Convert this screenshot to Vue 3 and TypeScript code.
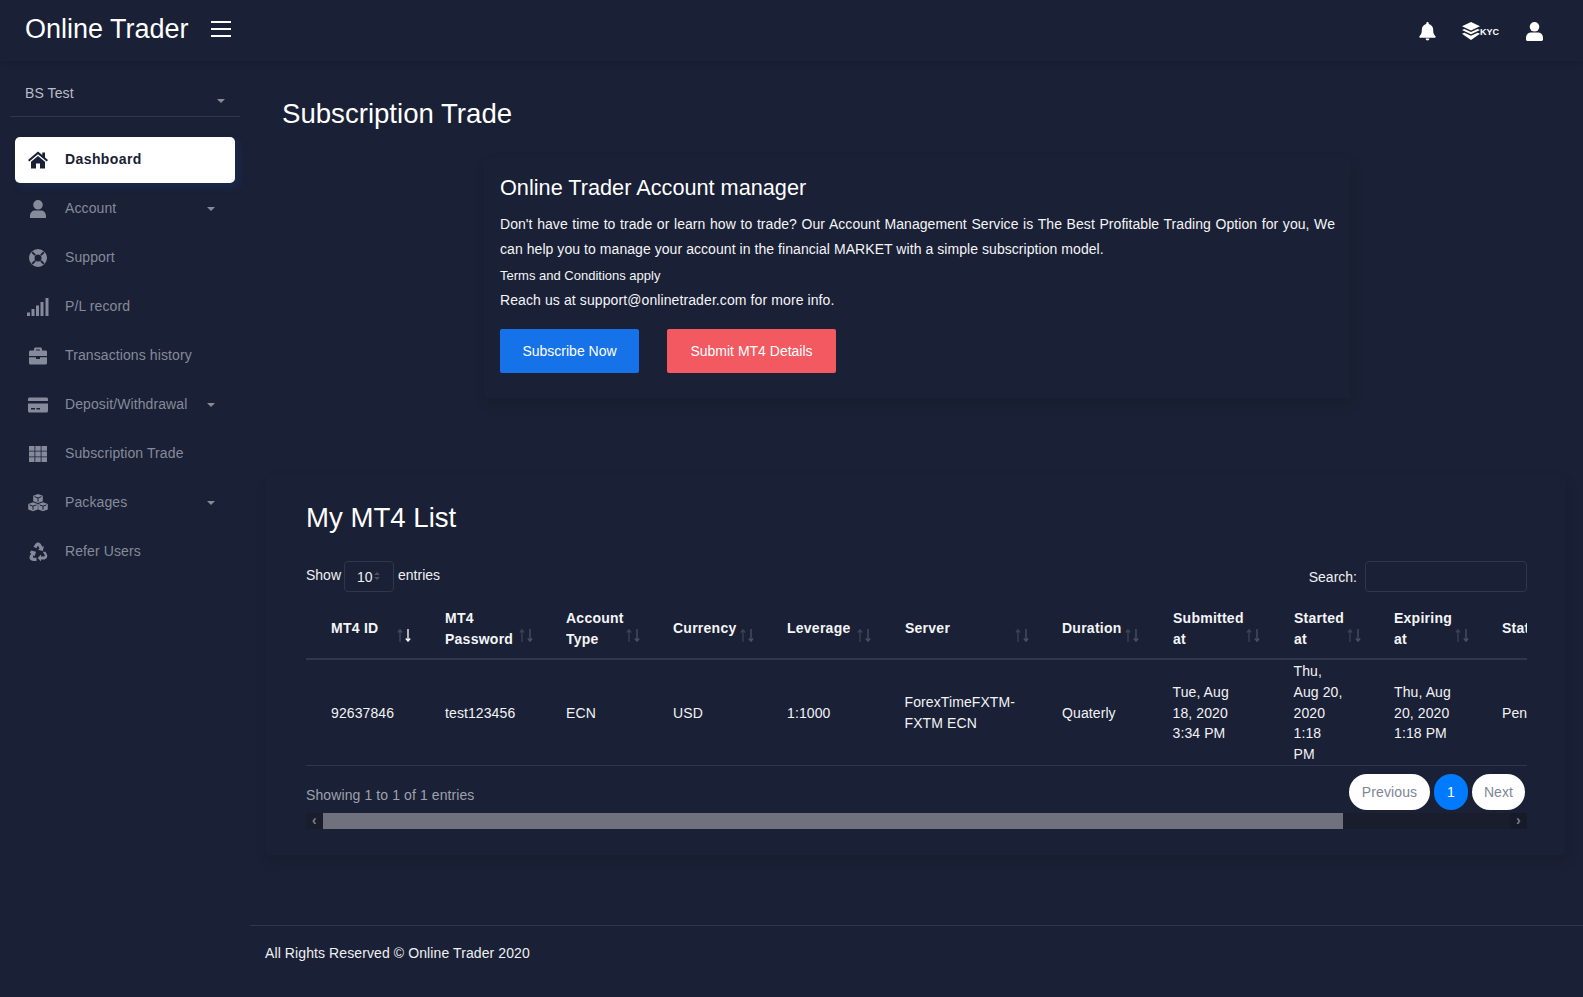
<script setup lang="ts">
interface NavItem { label: string; icon: string; caret?: boolean; active?: boolean }
const nav: NavItem[] = [
  { label: 'Dashboard', icon: 'home', active: true },
  { label: 'Account', icon: 'user', caret: true },
  { label: 'Support', icon: 'ring' },
  { label: 'P/L record', icon: 'signal' },
  { label: 'Transactions history', icon: 'case' },
  { label: 'Deposit/Withdrawal', icon: 'card', caret: true },
  { label: 'Subscription Trade', icon: 'grid' },
  { label: 'Packages', icon: 'cubes', caret: true },
  { label: 'Refer Users', icon: 'recycle' }
]
const cols = [
  { h: 'MT4 ID', w: 114, sort: 91, active: true },
  { h: 'MT4 Password', w: 121, sort: 99 },
  { h: 'Account Type', w: 107, sort: 85 },
  { h: 'Currency', w: 114, sort: 92 },
  { h: 'Leverage', w: 118, sort: 95 },
  { h: 'Server', w: 157, sort: 135 },
  { h: 'Duration', w: 111, sort: 88 },
  { h: 'Submitted at', w: 121, sort: 98 },
  { h: 'Started at', w: 100, sort: 78 },
  { h: 'Expiring at', w: 108, sort: 86 },
  { h: 'Status', w: 100, sort: 200 }
]
const row = ['92637846', 'test123456', 'ECN', 'USD', '1:1000', 'ForexTimeFXTM-FXTM ECN', 'Quaterly', 'Tue, Aug 18, 2020 3:34 PM', 'Thu, Aug 20, 2020 1:18 PM', 'Thu, Aug 20, 2020 1:18 PM', 'Pending']
</script>

<template>
  <div class="page">
    <header class="topbar">
      <div class="brand">
        <span class="logo">Online Trader</span>
        <svg class="burger" width="20" height="16" viewBox="0 0 20 16"><path d="M0 1h20M0 8h20M0 15h20" stroke="#fff" stroke-width="2" /></svg>
      </div>
      <div class="top-icons">
        <svg class="bell" width="17" height="19" viewBox="0 0 18 20"><path fill="#fff" d="M9 0a1.300 1.300 0 0 1 1.300 1.400v.7C13 2.700 15 5 15 8c0 4.500 1.200 5.700 2.500 7 .5.600.1 1.500-.7 1.500H1.200c-.8 0-1.200-.9-.7-1.500C1.800 13.700 3 12.500 3 8c0-3 2-5.300 4.700-5.900v-.7A1.300 1.300 0 0 1 9 0zM7 17.500h4a2 2 0 0 1-4 0z" /></svg>
        <span class="kyc">
          <svg width="18" height="18" viewBox="0 0 18 18"><path fill="#fff" d="M9 0 18 4.200 9 8.400 0 4.200zM2.400 6.900 9 10l6.600-3.100 2.400 1.100L9 12.200 0 8zM2.400 10.700 9 13.800l6.600-3.100 2.400 1.100L9 18 0 11.800z" /></svg>
          <b>KYC</b>
        </span>
        <svg width="17" height="19" viewBox="0 0 17 19"><circle cx="8.500" cy="4.800" r="4.800" fill="#fff" /><path fill="#fff" d="M0 16c0-3.300 2.200-5.500 5-5.500h7c2.800 0 5 2.200 5 5.500v1.200c0 1-.7 1.800-1.700 1.800H1.700C.7 19 0 18.200 0 17.200z" /></svg>
      </div>
    </header>

    <div class="body">
      <aside class="sidebar">
        <div class="profile">
          <span>BS Test</span>
          <i class="caret small"></i>
        </div>
        <nav class="nav">
          <a v-for="n in nav" :key="n.label" class="nav-item" :class="{ active: n.active }">
            <span class="nav-icon">
              <svg width="22" height="22" viewBox="0 0 22 22" fill="currentColor">
                <path v-if="n.icon === 'home'" d="M11 2.500 1 11l1.300 1.500L11 5.200l8.700 7.300L21 11l-3-2.600V3.500h-2.700v2.600zM11 7 4 12.800V19.500h5v-5h4v5h5v-6.700z" />
                <path v-else-if="n.icon === 'user'" d="M11 2a4.800 4.800 0 1 1 0 9.600A4.800 4.800 0 0 1 11 2zM3 18c0-3.500 2.500-5.500 5-5.500h6c2.500 0 5 2 5 5.500v2H3z" />
                <path v-else-if="n.icon === 'ring'" fill-rule="evenodd" d="M11 2a9 9 0 1 1 0 18 9 9 0 0 1 0-18zm0 5.500a3.500 3.500 0 1 0 0 7 3.500 3.500 0 0 0 0-7zM5.800 4.500 4.500 5.800l3 3 1.300-1.300zm10.400 0-3 3 1.300 1.300 3-3zM7.500 13.200l-3 3 1.300 1.300 3-3zm7 0-1.300 1.300 3 3 1.300-1.300z" />
                <path v-else-if="n.icon === 'signal'" d="M0 16.500h3v3.500H0zM4.500 13h3v7h-3zM9 9.500h3V20H9zM13.500 6h3v14h-3zM18.500 2H21.500v18h-3z" />
                <path v-else-if="n.icon === 'case'" d="M7 5.500V4c0-.8.7-1.500 1.500-1.500h5c.8 0 1.500.7 1.500 1.500v1.500h3.500c1 0 1.500.7 1.500 1.500v4H2V7c0-.8.5-1.500 1.500-1.500zM9 4.500v1h4v-1zM2 12.300h7v1.700h4v-1.700h7V18c0 .9-.6 1.500-1.500 1.500h-15C2.600 19.500 2 18.900 2 18z" />
                <path v-else-if="n.icon === 'card'" d="M1 5c0-.8.7-1.500 1.500-1.500h17c.8 0 1.500.7 1.500 1.500v2H1zM1 9.500h20V17c0 .8-.7 1.500-1.500 1.500h-17C1.700 18.500 1 17.800 1 17zm3 4.500v1.500h4V14zm5.500 0v1.500H13V14z" />
                <path v-else-if="n.icon === 'grid'" d="M2 3h5.500v4.800H2zM8.300 3h5.400v4.800H8.300zM14.500 3H20v4.800h-5.500zM2 8.600h5.500v4.800H2zM8.300 8.600h5.400v4.800H8.300zM14.500 8.600H20v4.800h-5.500zM2 14.200h5.500V19H2zM8.300 14.200h5.400V19H8.300zM14.500 14.200H20V19h-5.500z" />
                <g v-else-if="n.icon === 'cubes'">
                  <path d="M11 2l4.800 1.800v5.400L11 11 6.200 9.200V3.800zM6 10.300l4.800 1.800v5.400L6 19.300l-4.800-1.800v-5.400zM16 10.300l4.800 1.800v5.400L16 19.300l-4.800-1.800v-5.400z" />
                  <path d="M7.500 4.600 11 6l3.500-1.400M2.600 12.900 6 14.200l3.400-1.300M12.600 12.900 16 14.200l3.400-1.300M11 6v3.600M6 14.200v3.600M16 14.200v3.600" fill="none" stroke="#1a2035" stroke-width="1" />
                </g>
                <path v-else d="M8 3.500C9 2 10 1.500 11 1.500s2.200.5 3 2l1.500 2.500 1.500-.9-1.200 4.800-4.800-1.200 1.500-.9L11 4.500 9.300 7.300 6.500 5.800zM4.300 9.500l4.700 1.300-1.400 4.700-.8-1.500-.8 1.400c-.2.600.2 1.300 1 1.300H9.500v3.300H6.500c-3 0-5-2.700-3.500-5.400l1.200-2.100-1.400-.9zM18.500 10.800l1.300 2.400c1.400 2.700-.4 5.300-3.300 5.300H14v2l-3.300-3.500 3.300-3.500v2h2.800c.8 0 1.200-.8.900-1.400l-1.900-3.300z" />
              </svg>
            </span>
            <span class="nav-label">{{ n.label }}</span>
            <i v-if="n.caret" class="caret"></i>
          </a>
        </nav>
      </aside>

      <main class="main">
        <div class="content">
          <h2 class="page-title">Subscription Trade</h2>

          <section class="promo">
            <h4>Online Trader Account manager</h4>
            <p class="just">Don't have time to trade or learn how to trade? Our Account Management Service is The Best Profitable Trading Option for you, We can help you to manage your account in the financial MARKET with a simple subscription model.</p>
            <p class="terms">Terms and Conditions apply</p>
            <p>Reach us at support@onlinetrader.com for more info.</p>
            <div class="actions">
              <button class="btn blue">Subscribe Now</button>
              <button class="btn red">Submit MT4 Details</button>
            </div>
          </section>

          <section class="list-card">
            <h2 class="list-title">My MT4 List</h2>
            <div class="scroller">
              <div class="clip">
                <div class="controls">
                  <label class="len">Show <span class="select">10<i class="spin"></i></span> entries</label>
                  <label class="search"><span class="search-text">Search:</span> <span class="input"></span></label>
                </div>
                <table class="grid">
                  <colgroup>
                    <col v-for="c in cols" :key="c.h" :style="{ width: c.w + 'px' }" />
                  </colgroup>
                  <thead>
                    <tr>
                      <th v-for="c in cols" :key="c.h">
                        <span class="th-text">{{ c.h }}</span>
                        <svg class="sort" :class="{ on: c.active }" :style="{ left: c.sort + 'px' }" width="14" height="13" viewBox="0 0 14 13" fill="none">
                          <path class="up" d="M3 13V1M.8 3.500 3 .8l2.200 2.700" />
                          <path class="down" d="M11 0v12M8.800 9.500 11 12.200l2.200-2.700" />
                        </svg>
                      </th>
                    </tr>
                  </thead>
                  <tbody>
                    <tr>
                      <td v-for="(v, i) in row" :key="i">{{ v }}</td>
                    </tr>
                  </tbody>
                </table>
                <div class="tfoot">
                  <span class="info">Showing 1 to 1 of 1 entries</span>
                  <div class="pager">
                    <a class="pg prev">Previous</a>
                    <a class="pg cur">1</a>
                    <a class="pg next">Next</a>
                  </div>
                </div>
              </div>
              <div class="scrollbar">
                <span class="arrow">‹</span>
                <span class="thumb"></span>
                <span class="track"></span>
                <span class="arrow dark">›</span>
              </div>
            </div>
          </section>
        </div>

        <footer class="foot">All Rights Reserved © Online Trader 2020</footer>
      </main>
    </div>
  </div>
</template>

<style>
html, body { margin: 0; background: #1a2035; }
</style>

<style scoped>
.page { width: 1583px; height: 997px; background: #1a2035; color: #fff; font: 14px/21px "Liberation Sans", Arial, sans-serif; letter-spacing: .1px; overflow: hidden; }
.topbar { height: 61px; display: flex; align-items: center; justify-content: space-between; box-shadow: 0 1px 6px rgba(0, 0, 0, .14); position: relative; }
.brand { display: flex; align-items: center; padding: 0 0 4px 25px; letter-spacing: 0; }
.logo { font-size: 27px; line-height: 32px; }
.burger { margin-left: 22px; }
.top-icons { display: flex; align-items: center; gap: 27px; padding: 1px 40px 0 0; }
.bell { margin-right: -1px; }
.kyc { display: flex; align-items: center; }
.kyc b { font-size: 9px; line-height: 10px; letter-spacing: 0; padding-top: 1px; }
.body { display: flex; height: 936px; }
.sidebar { width: 250px; flex: none; box-sizing: border-box; }
.profile { height: 56px; margin: 0 10px; border-bottom: 1px solid #2f374b; box-sizing: border-box; padding: 22px 0 0 15px; color: #b9bdc8; position: relative; }
.profile .caret { position: absolute; left: 207px; top: 38px; }
.nav { padding: 20px 15px 0; display: flex; flex-direction: column; gap: 3px; }
.nav-item { height: 46px; display: flex; align-items: center; padding: 0 13px 0 12px; color: #858b9a; border-radius: 5px; position: relative; }
.nav-item.active { background: #fff; color: #1a2035; font-weight: 700; box-shadow: 4px 4px 10px rgba(23, 125, 255, .12); letter-spacing: .4px; }
.nav-icon { width: 22px; height: 22px; margin-right: 16px; display: flex; }
.nav-label { flex: 1; margin-bottom: 2px; }
.caret { width: 0; height: 0; border: 4px solid transparent; border-top-color: #858b9a; border-bottom: 0; }
.nav-item .caret { position: absolute; left: 192px; top: 21px; }
.main { flex: 1; min-width: 0; display: flex; flex-direction: column; }
.content { height: 864px; padding: 0 18px 0 16px; box-sizing: border-box; }
.page-title { margin: 0; padding: 36px 0 0 16px; font-size: 27.6px; font-weight: 400; line-height: 33px; letter-spacing: 0; }
.promo { width: 866px; height: 240px; box-sizing: border-box; margin: 28px 0 0 218px; padding: 15px 15px 0 16px; box-shadow: 2px 6px 15px rgba(0, 0, 0, .08); border-radius: 3px; }
.promo h4 { margin: 0 0 9px; font-size: 21.7px; font-weight: 400; line-height: 30px; letter-spacing: 0; }
.promo p { margin: 0; font-size: 14px; line-height: 25px; color: #f4f5f7; }
.promo p.just { text-align: justify; letter-spacing: .06px; }
.promo p.terms { font-size: 13px; line-height: 25px; padding-top: 1px; letter-spacing: 0; }
.actions { display: flex; gap: 28px; margin-top: 16px; }
.btn { border: 0; height: 44px; border-radius: 2px; color: #fff; font: 14px "Liberation Sans", Arial, sans-serif; padding: 0; }
.btn.blue { width: 139px; background: #1572e8; }
.btn.red { width: 169px; background: #f25961; }
.list-card { height: 379px; box-sizing: border-box; margin-top: 78px; padding: 25px 23px 0 40px; box-shadow: 2px 6px 15px rgba(0, 0, 0, .08); border-radius: 3px; }
.list-title { margin: 0; font-size: 27.6px; font-weight: 400; line-height: 33px; letter-spacing: 0; }
.scroller { margin-top: 27px; width: 1221px; }
.clip { overflow: hidden; padding-bottom: 3px; }
.controls { display: flex; justify-content: space-between; height: 40px; }
.len { display: flex; align-items: flex-start; padding-top: 4px; color: #f0f1f4; letter-spacing: 0; }
.select { width: 50px; height: 31px; margin: -4px 4px 0 3px; border: 1px solid #2f374b; border-radius: 4px; box-sizing: border-box; position: relative; padding: 5px 0 0 12px; }
.spin { position: absolute; left: 29px; top: 10px; width: 0; height: 0; border: 3.500px solid transparent; border-bottom-color: #49505f; border-top: 0; }
.spin::after { content: ""; position: absolute; left: -3.500px; top: 5px; border: 3.500px solid transparent; border-top-color: #49505f; border-bottom: 0; }
.search { display: flex; align-items: center; height: 31px; color: #f0f1f4; gap: 8px; letter-spacing: 0; }
.search-text { padding-top: 1px; }
.input { width: 162px; height: 31px; border: 1px solid #2f374b; border-radius: 4px; box-sizing: border-box; }
.grid { table-layout: fixed; border-collapse: collapse; width: 1271px; }
th { height: 58px; padding: 0 18px 2px 25px; box-sizing: border-box; text-align: left; font-weight: 700; letter-spacing: .25px; line-height: 21px; border-bottom: 2px solid #2f374b; position: relative; color: #f4f5f7; }
.th-text { display: block; overflow: hidden; }
th:last-child .th-text { white-space: nowrap; }
th:last-child .sort { display: none; }
.sort { position: absolute; top: 28px; stroke-width: 1.300; }
.sort .up { stroke: #3b4356; }
.sort .down { stroke: #4a5164; }
.sort.on .up { stroke: #3d4c66; }
.sort.on .down { stroke: #fff; }
td { height: 106px; padding: 1px 25px 0; box-sizing: border-box; border-bottom: 1px solid #2f374b; color: #f2f3f6; line-height: 20.800px; }
td:nth-child(6), td:nth-child(8), td:nth-child(9) { padding-left: 24.500px; }
td:last-child { white-space: nowrap; }
.tfoot { display: flex; justify-content: space-between; align-items: center; padding: 8px 2px 0 0; }
.info { color: #9ea2ad; padding-top: 7px; }
.pager { display: flex; gap: 4px; }
.pg { height: 36px; line-height: 36px; text-align: center; border-radius: 18px; background: #fff; color: #7e8595; }
.pg.prev { width: 81px; }
.pg.next { width: 53px; }
.pg.cur { background: #007bff; color: #fff; width: 34px; }
.scrollbar { display: flex; height: 16px; background: #191d2c; }
.arrow { width: 17px; text-align: center; color: #7b7f8a; line-height: 15px; font-size: 14px; font-weight: 700; }
.arrow.dark { background: #171b29; }
.thumb { width: 1020px; background: #6f727d; }
.track { flex: 1; }
.foot { height: 72px; border-top: 1px solid #2f374b; box-sizing: border-box; padding: 17px 0 0 15px; color: #eef0f3; }
</style>
